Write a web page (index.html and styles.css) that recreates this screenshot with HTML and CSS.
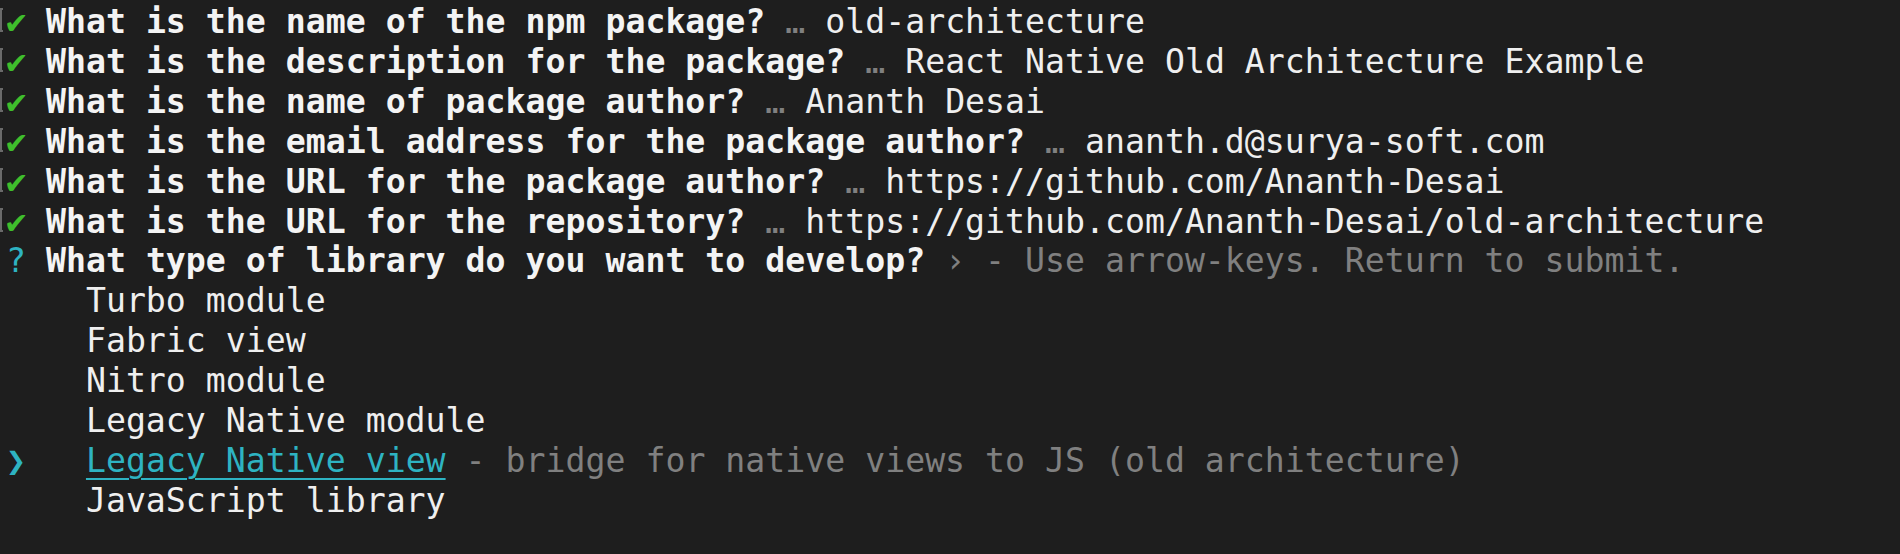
FILE: index.html
```html
<!DOCTYPE html>
<html>
<head>
<meta charset="utf-8">
<link rel="stylesheet" href="styles.css">
</head>
<body>
<div class="term">
  <div class="line"><span class="gut br"></span><span class="ok">✔</span> <span class="b">What is the name of the npm package?</span> <span class="dim">…</span> old-architecture</div>
  <div class="line"><span class="gut br"></span><span class="ok">✔</span> <span class="b">What is the description for the package?</span> <span class="dim">…</span> React Native Old Architecture Example</div>
  <div class="line"><span class="gut br"></span><span class="ok">✔</span> <span class="b">What is the name of package author?</span> <span class="dim">…</span> Ananth Desai</div>
  <div class="line"><span class="gut br"></span><span class="ok">✔</span> <span class="b">What is the email address for the package author?</span> <span class="dim">…</span> ananth.d@surya-soft.com</div>
  <div class="line"><span class="gut br"></span><span class="ok">✔</span> <span class="b">What is the URL for the package author?</span> <span class="dim">…</span> https://github.com/Ananth-Desai</div>
  <div class="line"><span class="gut br"></span><span class="ok">✔</span> <span class="b">What is the URL for the repository?</span> <span class="dim">…</span> https://github.com/Ananth-Desai/old-architecture</div>
  <div class="line"><span class="gut"></span><span class="q">?</span> <span class="b">What type of library do you want to develop?</span> <span class="dim">› - Use arrow-keys. Return to submit.</span></div>
  <div class="line"><span class="gut"></span>    Turbo module</div>
  <div class="line"><span class="gut"></span>    Fabric view</div>
  <div class="line"><span class="gut"></span>    Nitro module</div>
  <div class="line"><span class="gut"></span>    Legacy Native module</div>
  <div class="line"><span class="gut"></span><span class="q arrow">❯</span>   <span class="sel">Legacy Native view</span><span class="dim"> - bridge for native views to JS (old architecture)</span></div>
  <div class="line"><span class="gut"></span>    JavaScript library</div>
</div>
</body>
</html>
```
FILE: styles.css
```css
html, body {
  margin: 0;
  padding: 0;
  background: #1e1e1e;
}
body {
  width: 1900px;
  height: 554px;
  overflow: hidden;
  font-family: "DejaVu Sans Mono", "Liberation Mono", monospace;
  font-size: 33.2px;
  line-height: 40px;
  color: #efefef;
}
.term {
  display: flex;
  flex-direction: column;
  padding-top: 1px;
}
.line {
  height: 40px;
  white-space: pre;
}
.gut {
  display: inline-block;
  width: 6px;
  height: 40px;
  vertical-align: top;
  position: relative;
}
.gut.br::before {
  content: "";
  position: absolute;
  left: 0;
  top: 7px;
  width: 3px;
  height: 24px;
  border-left: 2px solid #6a6a6a;
  border-top: 2px solid #6a6a6a;
  border-bottom: 2px solid #6a6a6a;
  box-sizing: border-box;
}
.ok {
  color: #3fbe2c;
  display: inline-block;
  width: 20px;
  font-size: 34px;
  text-align: center;
}
.q {
  color: #2eb3c2;
  display: inline-block;
  width: 20px;
  text-align: center;
}
.arrow {
  font-weight: bold;
}
.b {
  font-weight: bold;
  color: #f4f4f4;
}
.dim {
  color: #808080;
}
.sel {
  color: #2eb3c2;
  text-decoration: underline;
  text-decoration-thickness: 2px;
  text-underline-offset: 6px;
}
```
